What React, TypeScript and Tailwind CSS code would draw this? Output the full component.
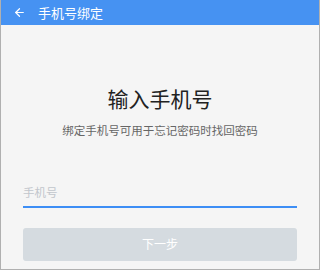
import { ArrowLeft } from "lucide-react";

export default function App() {
  return (
    <div className="w-[320px] h-[270px] flex flex-col bg-[#f5f5f5] border border-[#b0b0b0] border-t-0 font-['Noto_Sans_CJK_SC','Noto_Sans',sans-serif] overflow-hidden">
      {/* Header */}
      <div className="h-[25px] shrink-0 bg-[#4692f2] flex items-center pl-[13px] -mx-px">
        <ArrowLeft className="h-[13px] w-[13px] text-white" strokeWidth={2.2} />
        <span className="ml-[12px] text-[13px] text-white leading-none">手机号绑定</span>
      </div>

      {/* Body */}
      <div className="flex flex-col items-center">
        <h1 className="mt-[63px] text-[21px] leading-none text-[#222]">输入手机号</h1>
        <p className="mt-[16px] text-[11.5px] leading-none text-[#666]">绑定手机号可用于忘记密码时找回密码</p>
      </div>

      <div className="px-[22px] mt-[41px]">
        <div className="border-b-2 border-[#3d8ef5] pb-[4px]">
          <span className="text-[11.5px] leading-none text-[#c2c6cc]">手机号</span>
        </div>
        <button className="mt-[20px] w-full h-[33px] rounded-[3px] bg-[#d5dbe0] text-white text-[12px] leading-none">下一步</button>
      </div>
    </div>
  );
}
